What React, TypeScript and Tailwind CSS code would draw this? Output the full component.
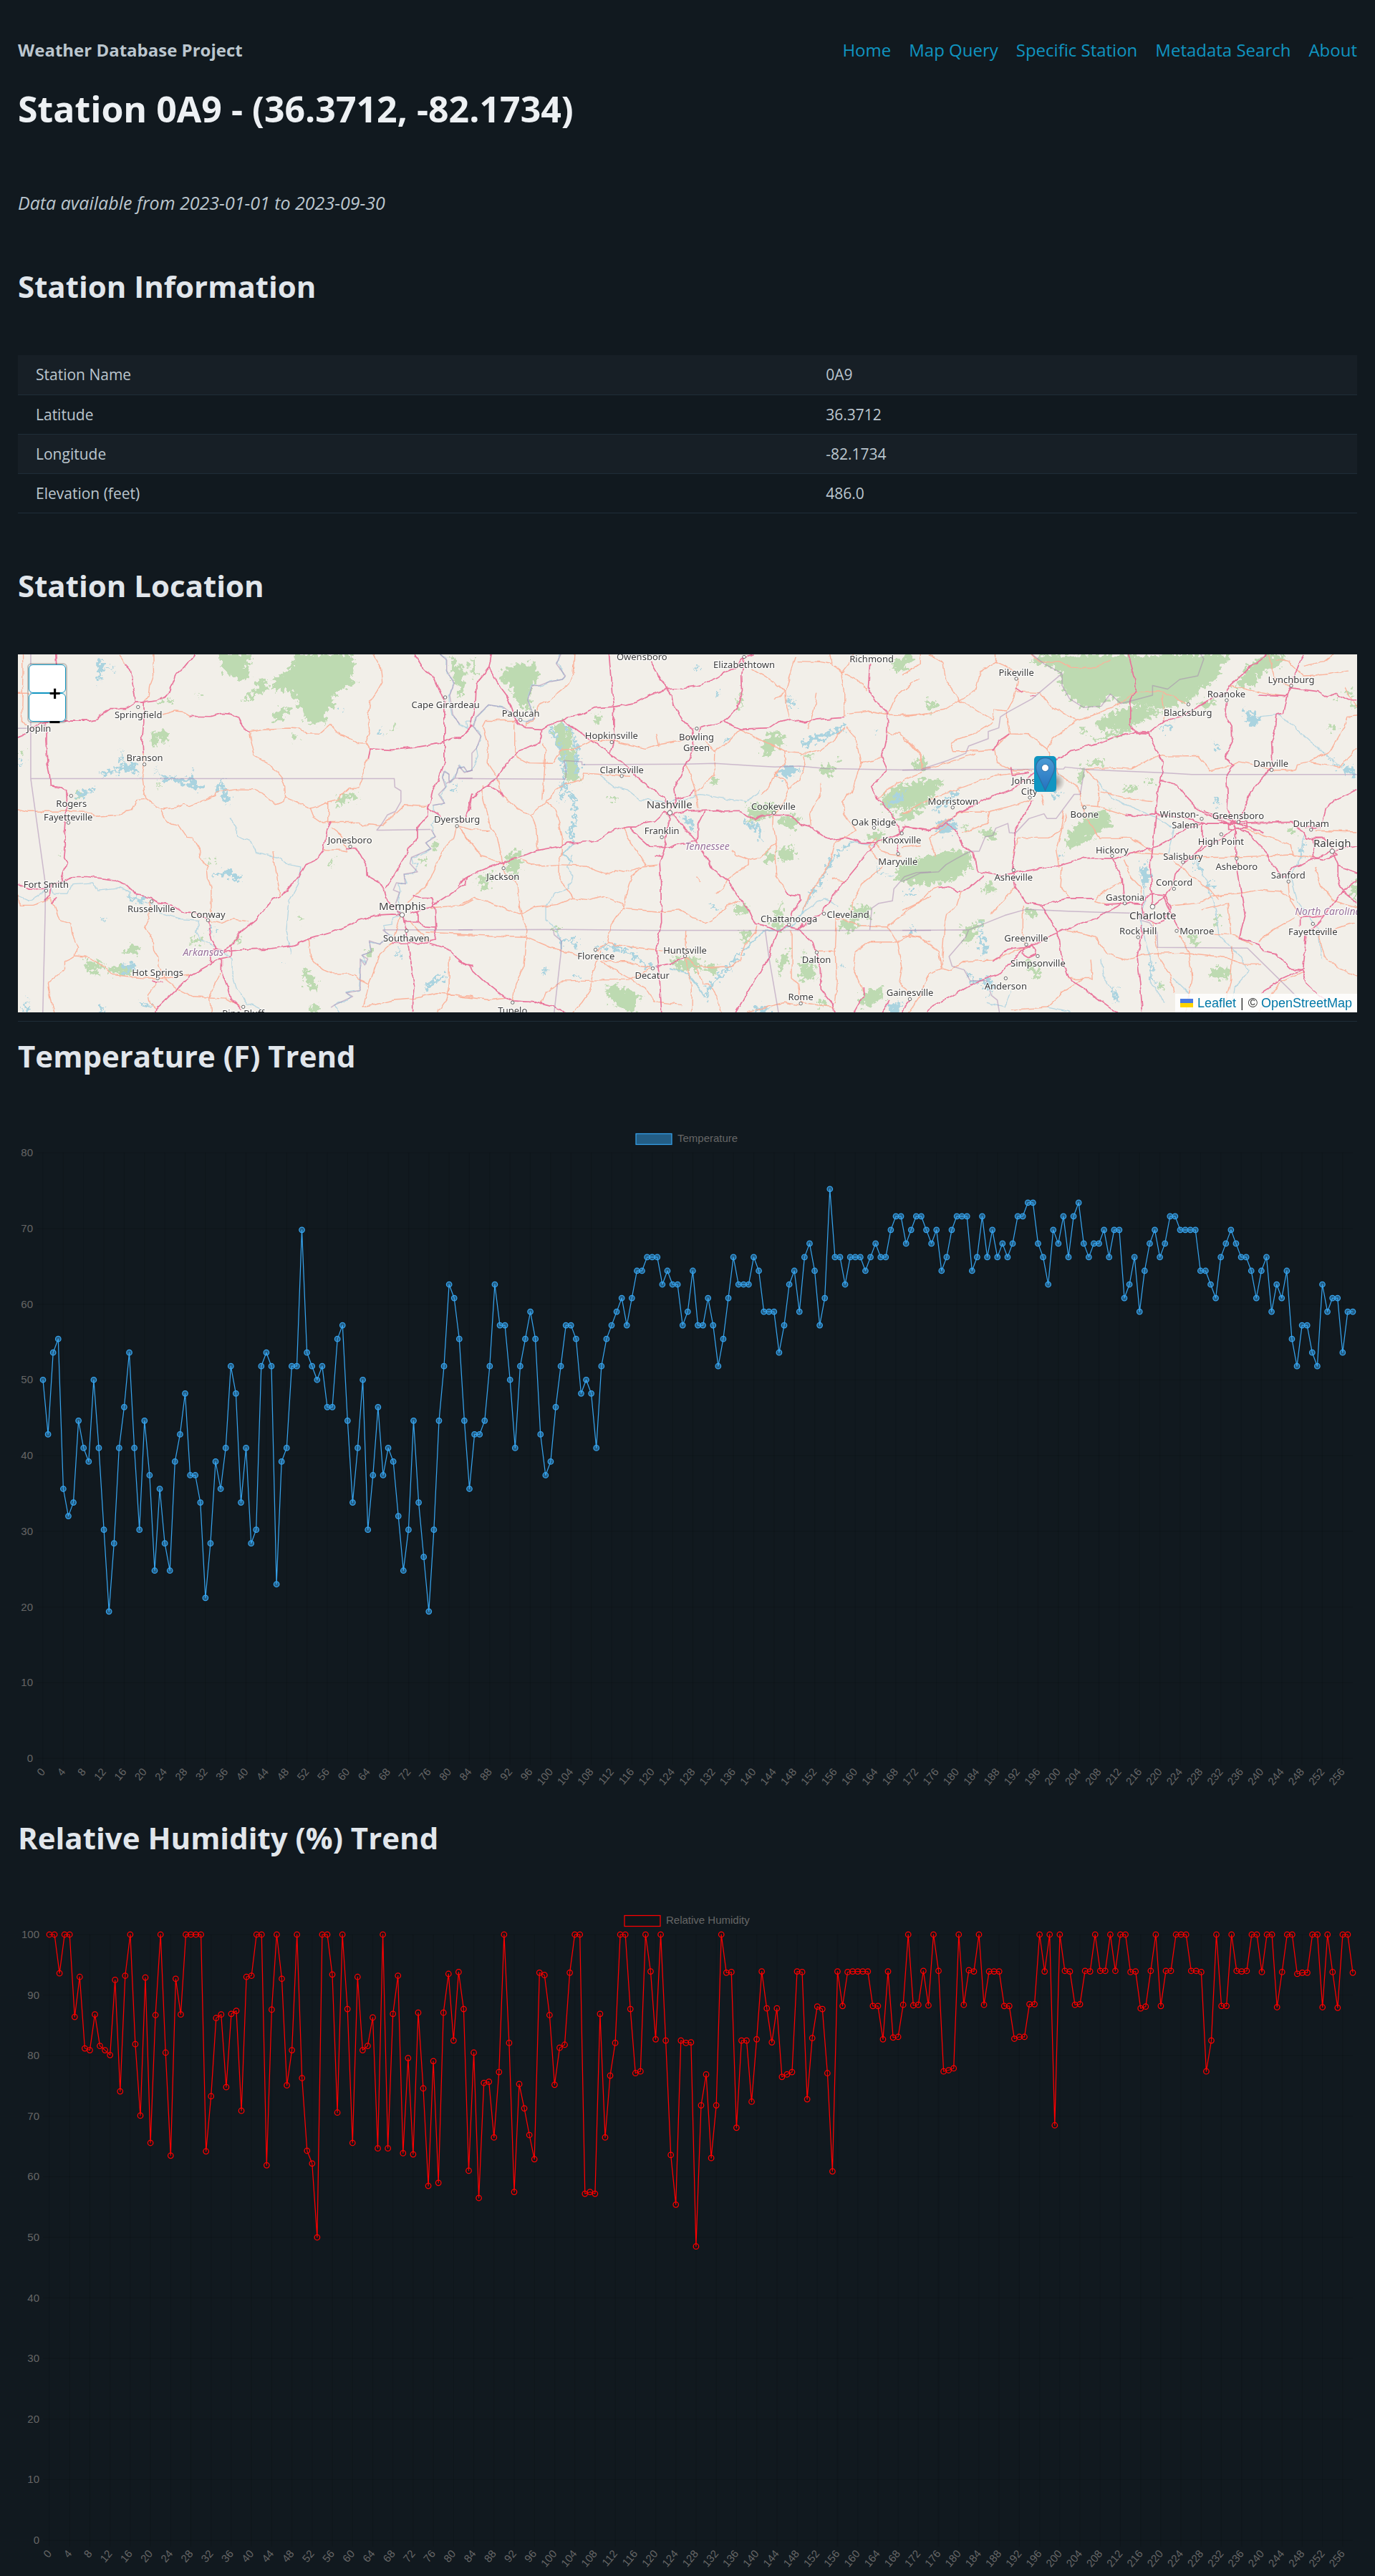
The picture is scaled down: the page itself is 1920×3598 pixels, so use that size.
import React from "react";

/* ------------------------------------------------------------------ data */

const celsius = [
  10, 6, 12, 13, 2, 0, 1, 7, 5, 4, 10, 5, -1, -7, -2, 5, 8, 12, 5, -1,
  7, 3, -4, 2, -2, -4, 4, 6, 9, 3, 3, 1, -6, -2, 4, 2, 5, 11, 9, 1,
  5, -2, -1, 11, 12, 11, -5, 4, 5, 11, 11, 21, 12, 11, 10, 11, 8, 8, 13, 14,
  7, 1, 5, 10, -1, 3, 8, 3, 5, 4, 0, -4, -1, 7, 1, -3, -7, -1, 7, 11,
  17, 16, 13, 7, 2, 6, 6, 7, 11, 17, 14, 14, 10, 5, 11, 13, 15, 13, 6, 3,
  4, 8, 11, 14, 14, 13, 9, 10, 9, 5, 11, 13, 14, 15, 16, 14, 16, 18, 18, 19,
  19, 19, 17, 18, 17, 17, 14, 15, 18, 14, 14, 16, 14, 11, 13, 16, 19, 17, 17, 17,
  19, 18, 15, 15, 15, 12, 14, 17, 18, 15, 19, 20, 18, 14, 16, 24, 19, 19, 17, 19,
  19, 19, 18, 19, 20, 19, 19, 21, 22, 22, 20, 21, 22, 22, 21, 20, 21, 18, 19, 21,
  22, 22, 22, 18, 19, 22, 19, 21, 19, 20, 19, 20, 22, 22, 23, 23, 20, 19, 17, 21,
  20, 22, 19, 22, 23, 20, 19, 20, 20, 21, 19, 21, 21, 16, 17, 19, 15, 18, 20, 21,
  19, 20, 22, 22, 21, 21, 21, 21, 18, 18, 17, 16, 19, 20, 21, 20, 19, 19, 18, 16,
  18, 19, 15, 17, 16, 18, 13, 11, 14, 14, 12, 11, 17, 15, 16, 16, 12, 15, 15,
];

const temperature = celsius.map((c) => 32 + c * 1.8);

const humidity = [
  100, 100, 93.6, 100, 100, 86.4, 93, 81.2, 80.9, 86.8, 81.6, 80.9, 80.1, 92.5, 74.1, 93.2, 100, 81.9, 70.1, 92.9,
  65.6, 86.7, 100, 80.5, 63.5, 92.7, 86.8, 100, 100, 100, 100, 64.2, 73.3, 86.2, 86.8, 74.8, 86.9, 87.4, 70.9, 93,
  93.2, 100, 100, 61.9, 87.6, 100, 92.7, 75.1, 80.9, 100, 76.3, 64.3, 62.2, 50, 100, 100, 93.4, 70.6, 100, 87.7,
  65.6, 93, 80.9, 81.6, 86.3, 64.7, 100, 64.7, 86.9, 93.2, 63.9, 79.6, 63.7, 87.1, 74.6, 58.5, 79.1, 59, 87.1, 93.5,
  82.5, 93.8, 87.7, 61, 80.5, 56.5, 75.5, 75.7, 66.5, 77.3, 100, 82.1, 57.5, 75.3, 71.3, 66.9, 62.9, 93.7, 93.3, 86.7,
  75.2, 81.3, 81.8, 93.7, 100, 100, 57.2, 57.5, 57.2, 86.9, 66.5, 76.7, 82.1, 100, 100, 87.7, 77.1, 77.4, 100, 93.9,
  82.7, 100, 82.5, 63.6, 55.4, 82.5, 82.1, 82.2, 48.5, 71.8, 76.9, 63.1, 71.8, 100, 93.7, 93.8, 68.1, 82.5, 82.5, 72.4,
  82.7, 93.9, 87.8, 82.2, 87.8, 76.5, 76.9, 77.3, 93.9, 93.8, 72.8, 82.9, 88.1, 87.7, 77.1, 60.9, 93.9, 88.2, 93.8, 93.9,
  93.9, 93.9, 93.9, 88.2, 88.2, 82.7, 93.9, 83, 83.1, 88.4, 100, 88.3, 88.4, 94, 88.3, 100, 94, 77.4, 77.6, 77.9,
  100, 88.4, 94.1, 93.9, 100, 88.4, 93.9, 93.9, 93.9, 88.2, 88.2, 82.8, 83.1, 83.1, 88.5, 88.5, 100, 93.9, 100, 68.5,
  100, 94, 93.9, 88.4, 88.5, 94, 93.9, 100, 94, 94, 100, 94, 100, 100, 93.8, 93.9, 87.8, 88.1, 94, 100,
  88.2, 94, 94, 100, 100, 100, 94, 94, 93.8, 77.4, 82.5, 100, 88.2, 88.2, 100, 94, 93.9, 94, 100, 100,
  93.8, 100, 100, 88, 93.8, 100, 100, 93.5, 93.7, 93.7, 100, 100, 88, 100, 93.8, 87.9, 100, 100, 93.7,
];

/* ---------------------------------------------------------------- charts */

type ChartProps = {
  title: string;
  values: number[];
  max: number;
  left: number;
  legendX: number;
  stroke: string;
  fill: string;
};

function TrendChart({ title, values, max, left, legendX, stroke, fill }: ChartProps) {
  const top = 39;
  const bottom = 885;
  const right = 1864;
  const x = (i: number) => left + ((right - left) * i) / (values.length - 1);
  const y = (v: number) => bottom - ((bottom - top) * v) / max;
  const yTicks = Array.from({ length: max / 10 + 1 }, (_, i) => i * 10);
  const xTicks = Array.from({ length: 65 }, (_, i) => i * 4);

  return (
    <svg
      viewBox="0 0 1870 935"
      className="block h-auto w-full font-['Liberation_Sans',Arial,sans-serif] text-[15px]"
      role="img"
      aria-label={`${title} trend`}
    >
      <g stroke="#000" strokeOpacity="0.1" strokeWidth="1.25">
        {yTicks.map((t) => (
          <line key={t} x1={left - 9} x2={right} y1={y(t)} y2={y(t)} />
        ))}
        {xTicks.map((t) => (
          <line key={t} x1={x(t)} x2={x(t)} y1={top} y2={bottom + 9} />
        ))}
      </g>
      <g fill="#666">
        {yTicks.map((t) => (
          <text key={t} x={left - 14} y={y(t) + 5} textAnchor="end">
            {t}
          </text>
        ))}
        {xTicks.map((t) => (
          <text key={t} transform={`translate(${x(t)} ${bottom + 16}) rotate(-50)`} y="5" textAnchor="end">
            {t}
          </text>
        ))}
        <text x={legendX + 58} y="24">
          {title}
        </text>
      </g>
      <rect x={legendX} y="12.5" width="50" height="15" fill={fill} stroke={stroke} strokeWidth="1.25" />
      <polyline
        points={values.map((v, i) => `${x(i).toFixed(1)},${y(v).toFixed(1)}`).join(" ")}
        fill="none"
        stroke={stroke}
        strokeWidth="1.25"
        strokeLinejoin="round"
      />
      <g fill={fill} stroke={stroke} strokeWidth="1.25">
        {values.map((v, i) => (
          <circle key={i} cx={x(i)} cy={y(v)} r="3.75" />
        ))}
      </g>
    </svg>
  );
}

/* ------------------------------------------------------------------- map */

/* The drawing is split in three sheets that share one sheet grid. */
const SX = 660 / 1568;
const SY = 530 / 1568;
const TOP = -14;

type Place = [name: string, x: number, y: number, dotX?: number, dotY?: number];

type Sheet = {
  ox: number;
  forest: string;
  lakes: string;
  rivers: string;
  borders: string;
  trunk: string;
  motorway: string;
  towns: Place[];
  cities: Place[];
  states: Place[];
};

const sheets: Sheet[] = [
  {
    ox: -25,
    forest:
      "M985 41L1170 41L1175 85L1165 140L1182 150L1160 170L1120 195L1105 225L1115 250L1080 275L1085 320L1060 330L1020 325L1000 270L975 220L955 185L920 195L900 170L930 130L960 100L975 60Z M725 41L835 41L832 70L810 95L830 110L820 145L790 148L745 115L730 80Z M850 150L885 145L890 185L855 210L800 240L850 180Z M905 290L925 265L980 255L930 315L903 320Z M500 370L530 360L555 365L555 410L540 412L535 385L515 430L498 400Z M1110 665L1130 630L1185 612L1185 630L1130 665Z M283 1302L310 1305L345 1320L340 1340L315 1335L330 1362L305 1362L283 1340Z M360 1340L400 1320L440 1325L445 1368L400 1365L365 1350Z M410 1265L440 1243L463 1255L460 1280L410 1275Z M1000 1345L1025 1350L1055 1410L1050 1430L1030 1425L1005 1375Z M1033 1490H1062L1060 1521H1030Z M630 1215L665 1208L680 1235L640 1238Z M1428 820L1450 815L1455 850L1435 855Z M1290 355L1310 328L1320 340L1300 362Z M965 385L985 370L990 400Z M780 1210L800 1205L798 1235L780 1235Z M1495 50L1510 60L1535 140L1510 170L1500 110Z M1560 60l20 10v60l-20 -10Z M1215 1260h25v30h-20z M692 885l12 5l2 28l-8 -6z M1090 890l14 -5l-6 35z M1390 885l20 -8l8 25l-25 8z M192 870l14 -14l-4 20z M515 240l20 -8l10 12l-25 5z M560 230l18 0l-6 18z M655 205l12 -5l-4 12z M518 575l10 0l-2 25z M248 610l20 -5l5 30l-15 8z M990 1120l12 5l0 25z M62 440l20 5l-8 20z",
    lakes:
      "M325 55L338 70L345 90L390 112L350 100L338 110L333 160L322 130L328 100L320 80Z M330 550L350 525L385 520L400 505L403 432L412 500L450 498L462 550L440 520L390 532L350 540Z M515 480L525 540L600 550L632 560L638 515L648 570L670 590L650 608L620 580L590 572L530 555Z M735 545L745 600L770 640L745 660L732 610L720 585Z M255 620L290 605L310 580L315 600L285 630L255 635Z M705 950L760 925L770 950L805 955L790 985L775 960L710 955Z M1405 1415L1470 1362L1480 1370L1470 1385L1415 1425Z M415 1005L430 1040L490 1060L470 1072L430 1050Z M400 1320L440 1315L460 1340L420 1360Z M1315 1260L1340 1295L1325 1290Z M1255 340l10 15l5 22l-12 -8z M1500 605L1528 570L1510 610Z M75 1521l10 -60l10 60z M700 1165l12 0l-8 40z M460 1475l40 10l15 18l-30 -8z M330 1490l15 5l-2 26l-12 0z M930 1310l14 8l-6 4z M340 1130l18 5l-12 5z M1130 270l10 0l-4 12z M59 480l25 8l-20 6z",
    rivers:
      "M1460 41L1480 60L1480 110L1505 160L1490 210L1490 235L1500 290L1525 330L1550 345L1545 320L1568 320 M1568 520L1550 525L1540 505L1520 510L1510 550L1490 570L1490 535L1475 525L1470 550L1480 590L1460 620L1475 655L1440 665L1440 690L1455 705L1430 745L1445 795L1412 820L1430 845L1400 870L1365 880L1370 910L1390 905L1370 950L1340 950L1350 990L1325 985L1330 1020L1322 1060L1330 1120L1300 1130L1300 1160L1270 1165L1280 1190L1300 1200L1260 1240L1225 1230L1230 1270L1200 1280L1215 1320L1195 1300L1195 1380L1190 1430L1145 1440L1165 1455L1145 1470L1110 1490L1125 1521 M59 1040L95 1060L130 1035L165 1005L180 1030L225 1030L240 990L310 985L325 1015L400 1005L430 1020L430 1045L470 1060L510 1075L530 1110L600 1135L660 1140L650 1190L665 1220L700 1240L740 1270L770 1300L770 1360L785 1420L820 1480L870 1510 M760 715L785 750L785 790L840 820L850 860L920 880L960 910L1000 920L990 990L960 1060L950 1180L965 1280",
    borders:
      "M102 41V555H1308L1310 590L1330 605L1330 650L1312 690L1285 705L1265 745L1250 768L1428 765 M102 555L150 985L150 1100L142 1521 M1270 1180H1568 M59 347H102 M1480 575L1510 553H1568 M1460 41L1482 65L1482 110L1507 160L1492 210L1502 290L1525 330 M1568 520L1550 527L1540 507L1520 512L1510 552L1490 572L1490 537L1473 525L1468 550L1478 590L1455 620L1475 657L1435 665 M1430 765L1445 795L1412 820L1430 845L1365 880L1360 905L1385 940L1340 950L1345 990L1315 985L1305 1015L1325 1025L1310 1080L1325 1120 M1270 1180L1290 1200L1260 1240L1225 1225L1232 1270L1200 1285L1220 1300L1210 1325L1195 1300L1195 1430L1148 1440L1170 1455L1110 1490L1098 1500",
    trunk:
      "M75 41L76 120L72 325L90 335 M59 202H95 M59 680L90 690L230 690L300 695L330 713L390 708L420 685L440 680L455 643L487 640 M475 450L478 500L472 545L478 600L485 640L530 682L557 738L590 745L620 800L640 802L662 850L668 890L686 915L690 970L703 1000L703 1120 M530 682L580 675L610 660L625 668L665 650L715 625L725 608L800 598L850 600L870 620L915 662L940 650L947 630L985 650L1030 678L1090 655 M828 360L833 400L845 462L885 490L915 520L935 550L945 590L947 630 M540 290L580 275L605 278L630 297 M828 360L870 350L960 346L1000 350L1020 366L1060 368L1095 330L1130 375L1190 410L1215 412L1228 432 M1240 41L1262 90L1268 155L1250 195L1228 235L1222 300L1228 360L1213 400L1228 432L1222 475L1208 490L1203 550L1190 592L1158 594L1120 640L1090 650L1090 740 M1030 678L1040 710L1075 740L1098 735L1190 735L1205 755L1225 742L1270 748L1340 665L1415 670 M1098 755L1130 785L1150 845 M1075 848L1130 850L1150 855 M905 855L915 930L930 1045 M60 1035L65 1078L110 1078L150 1062L165 1050L180 1085L195 1140L235 1155L240 1200L258 1250L250 1290L215 1310L215 1340L160 1400L165 1440L180 1521 M250 1290L300 1295L345 1330L370 1365L470 1378L545 1380L600 1370L635 1367 M500 1065L495 1130L480 1170L505 1215L510 1265L522 1290L525 1330L545 1380L590 1425L640 1455L750 1462L800 1500 M690 1140L735 1153L770 1135L825 1145 M730 1360L710 1410L695 1460L700 1521 M520 1400L490 1450L495 1480L520 1505 M1025 1220L1030 1290L1060 1335L1105 1360L1175 1362L1190 1385L1222 1405 M1300 1235L1260 1280L1225 1400L1205 1500L1300 1472L1360 1465L1450 1440L1568 1455 M1490 1290L1490 1420L1480 1470L1450 1521 M1350 1070L1420 990L1445 920L1475 840L1505 800L1515 755 M1525 760L1568 825 M1330 1120L1300 1235 M1360 1145L1420 1225 M1410 1190L1568 1198 M1430 1088L1535 1078L1568 1055 M395 41L412 80 M508 41L510 130L498 170L495 210L480 235",
    motorway:
      "M59 382L90 366L130 325L155 320L215 313L300 314L320 308L345 283L365 265L420 265L450 240L478 239L520 233L548 214L565 190L587 120L612 92L645 41 M185 41L187 80 M153 320L152 400L157 490L165 540L167 585L205 592L220 605L222 640L219 700L214 760L217 830L213 885L222 905L206 960L204 978 M412 80L430 105L443 180L450 238 M478 235L477 320L472 385L475 450 M630 297L700 298L735 285L765 288L790 305L805 340L828 360 M1222 475L1228 432L1300 436L1370 427L1455 410L1500 386L1530 384L1568 335 M1375 41L1400 90L1440 140L1475 240L1475 490L1455 560L1435 600L1428 650L1418 675L1418 710L1385 755L1385 800L1360 840L1280 1010 M1418 675L1465 710 M1568 620L1555 680L1545 720 M59 990L95 1015L150 1012L170 990L215 975L245 960L290 960L370 972L420 995L455 1035L500 1045L530 1070L570 1078L605 1103L650 1112L690 1135L695 1190L700 1220L715 1250L745 1270L820 1260L895 1258L975 1243L1020 1220L1100 1190L1155 1163L1180 1145L1240 1120L1300 1115L1334 1118 M740 1268L770 1240L800 1185L850 1135L905 1055L930 1045L965 990L990 965L1015 910L1045 895L1073 850L1085 765L1098 735 M518 1521L520 1505L630 1370L700 1320L735 1298L765 1290L768 1240 M700 1318L698 1290L718 1250 M735 1298L735 1355L755 1420L765 1465L800 1510 M1145 845L1180 845L1195 865L1215 910L1217 955L1260 985L1275 1018L1285 1060L1334 1118L1340 1145L1385 1145L1385 1100 M1370 1040L1395 1048L1430 1050L1443 1090L1447 1180L1440 1222L1410 1232L1300 1235 M1385 1145L1410 1165L1445 1168 M1334 1118L1350 1190L1355 1250L1365 1330L1377 1410L1370 1480L1370 1521 M1425 1235L1480 1255L1500 1280L1545 1325L1568 1330 M1360 1110L1430 1085L1480 1045L1545 990L1550 960L1568 950 M150 1060L165 1035L170 990 M170 1070L188 1045 M505 1390L520 1397L545 1395",
    towns: [
      ["Springfield", 459, 289, 458, 259],
      ["Joplin", 129, 346, 129, 312],
      ["Branson", 480, 468, 479, 496],
      ["Rogers", 237, 657, 236, 626],
      ["Fayetteville", 226, 712, 227, 737],
      ["Cape Girardeau", 1478, 248, 1477, 219],
      ["Dyersburg", 1516, 723, 1516, 751],
      ["Jonesboro", 1161, 809, 1162, 836],
      ["Fort Smith", 153, 991, 153, 1018],
      ["Russellville", 502, 1092, 503, 1062],
      ["Conway", 690, 1114, 690, 1140],
      ["Southaven", 1348, 1214, 1349, 1184],
      ["Hot Springs", 523, 1354, 523, 1380],
      ["Pine Bluff", 807, 1525, 807, 1498],
    ],
    cities: [["Memphis", 1335, 1084, 1334, 1118]],
    states: [["Arkansas", 674, 1272]],
  },
  {
    ox: 615,
    forest:
      "M150 100L205 80L260 85L265 140L245 175L235 230L240 270L215 265L190 225L170 175L135 150Z M0 80L18 100L15 200L0 210Z M315 335L350 322L370 370L395 490L403 555L360 572L352 480L325 390Z M450 285L470 290L470 325L450 330Z M1010 400L1040 355L1075 380L1078 420L1045 430L1025 465L1008 450Z M1200 510L1225 492L1245 520L1235 550L1200 535Z M1150 450h25v18h-25z M1405 640L1440 590L1540 560L1568 555V620L1500 660L1440 690L1410 670Z M1440 720L1490 690L1568 620V650L1480 740Z M1450 930L1500 900L1568 888V998L1520 990L1455 970Z M960 660L1045 655L1050 700L970 740Z M1060 710L1140 712L1115 770L1060 740Z M1060 840L1110 835L1118 890L1070 895Z M1020 860h30v40h-35z M1030 1150L1060 1090L1075 1055L1075 1140L1080 1180L1050 1185Z M910 1080L960 1080L965 1110L930 1120Z M935 1185L965 1185L965 1220L945 1235Z M1265 1150L1310 1130L1330 1170L1310 1185L1265 1175Z M1300 1085L1370 1080L1365 1140L1310 1130Z M1060 1330L1080 1270L1105 1265L1090 1310L1060 1370Z M1130 1410L1145 1260L1155 1320L1180 1310L1180 1390L1150 1380Z M490 1410L530 1410L605 1455L580 1521L545 1510L500 1465Z M165 870L210 845L205 930L190 960L160 930Z M60 970L110 940L105 1000L80 1010Z M700 1310L750 1290L790 1290L800 1340L740 1350Z M830 1320L865 1330L855 1365L810 1340Z M1340 1440L1410 1410L1410 1460L1360 1500L1330 1480Z M1430 75L1510 50L1490 90L1460 110Z M315 1160L340 1175L340 1192L320 1190Z M1350 790L1410 770L1400 820L1360 810Z M840 550h18v30h-18z M1550 240h18v50z M500 630h22v15h-22z M935 200l12 0l-8 60l-12 10z M1255 470h18v20h-16z M1195 1470h18v25h-18z",
    lakes:
      "M1060 520L1100 490L1140 520L1105 530L1090 560L1065 540Z M1140 410L1170 380L1250 355L1280 320L1285 345L1240 380L1180 400L1150 430Z M740 700L790 740L780 770L750 730Z M950 730L1000 750L1005 810L985 770L950 750Z M1420 660L1480 600L1530 590L1470 650L1430 670Z M1380 870l10 70l50 20l-45 -12z M830 1070L860 1095L880 1085L850 1105Z M985 1490L1040 1500L1020 1521L980 1521Z M1425 1500L1470 1470L1460 1521L1420 1521Z M1510 1170l12 5l-10 20z M280 1340l15 -10l-8 40z M850 200l20 -15l0 25z M1090 220l15 10l15 30l-20 -5z M880 400l25 -20l-15 30z M1380 350l20 10l-5 10z M1475 1025l20 5l-10 10z M1265 1335l18 0l-10 8z M375 1360l30 10l-20 8z M780 90l25 8l-15 8z",
    rivers:
      "M340 41L325 80L355 130L345 145L300 155L270 170L245 170L230 230L245 280L250 310L225 320L200 310L150 260L100 250L60 300L50 340L75 380L60 430L65 460L45 520L20 530L0 500 M470 540L520 590L560 600L600 640L680 650L760 640L800 620L900 640L960 650L1000 600 M380 870L360 920L380 960L365 1010L320 1030L290 1080L290 1140L320 1165L340 1225 M1140 1110L1210 1050L1260 1080 M1380 830L1330 820L1310 815",
    borders:
      "M340 41L325 80L355 130L345 145L300 155L270 170L245 170L230 230L245 280L250 310L225 320 M180 290L150 260L100 250L60 300L50 340L75 380L60 430L45 450L45 520L20 530L0 500 M0 555L355 557L358 530L350 480L410 485L410 497L755 495L850 492L1050 507L1130 503L1220 513L1422 518L1540 520L1568 510 M0 1180L315 1178L640 1182H1568 M1365 1180L1372 1090L1395 1070L1440 1060L1445 1010L1480 960L1520 943L1568 940 M315 1178L318 1200L342 1225L340 1280L318 1521 M1018 1182L1030 1290L1062 1521",
    trunk:
      "M385 41L380 120L365 165L330 200L300 235L265 250L250 320L225 325V345 M190 315L90 315L80 340L100 420L98 490L130 550 M187 320V440L195 465L235 490L315 492L340 440L380 435L440 400L500 395L620 430L660 415L735 400L775 375 M655 370L665 420 M278 410L290 440L280 640 M130 550L140 620L178 660L238 705L258 760L262 830L265 850 M238 705L290 650L325 600L350 580L410 560L415 535L470 540L570 545 M290 650L320 680L335 740L345 800L345 870L335 900L335 970L380 1045 M82 580L80 640L95 700L100 740L130 800L140 860L150 925 M0 750L40 765L105 768 M10 770L75 875L150 905 M205 885L260 915L330 910L430 915L445 930L490 950L520 935L550 942L610 920L660 915 M550 755L570 820L605 875L625 915 M150 930L195 995L200 1060L207 1115L228 1180L215 1340L190 1400L180 1480 M0 1080L50 1048L100 1065L207 1115L250 1085L330 1075L380 1048L430 1055L480 1040L540 1070L550 1092L620 1100L680 1105L740 1100L780 1130L820 1153L860 1125L890 1080L935 1060 M610 920L575 960L560 1020L548 1090L505 1170L495 1235 M0 1200L220 1208L300 1250L400 1285 M460 1265L495 1235L570 1250L655 1262L730 1280 M757 1180L755 1285L760 1350L775 1400L775 1521 M755 1290L790 1330L830 1335L910 1330L935 1300L950 1240L985 1190L990 1165 M480 1310L560 1310L600 1330L640 1335 M470 1310L560 1375L620 1420L650 1475L740 1490 M275 1490L290 1440L350 1390L440 1388L570 1385L640 1340 M470 1265L455 1330L440 1388V1425L410 1480L380 1521 M790 1340L810 1400L830 1400L860 1460L870 1521 M850 445L848 540L790 610L795 680 M757 500L775 550L790 610 M815 390L850 445L880 420L935 350L1000 390L1080 440L1150 450L1200 435L1240 400L1285 345 M1080 440L1085 490L1045 540L1030 590L1005 620 M1045 540L1085 560L1095 600L1080 650L1047 700L1045 750L1055 820L1050 870L1055 960L1085 1015 M1145 460L1150 500L1130 560L1095 600 M975 100L1040 150L1085 195L1090 260L1100 305 M1045 230L1085 195L1105 110L1120 50 M1125 70L1200 72L1235 80L1270 115L1280 200L1280 300 M1235 41L1240 80 M1272 115L1300 70L1310 41 M1280 120L1340 160L1355 190 M1160 350L1180 270L1190 200 M1290 285L1365 275L1425 290L1500 295L1568 285 M1425 290L1450 220L1525 140 M1290 340L1320 400L1335 490L1305 610L1275 650L1280 700L1320 770 M1335 490L1380 480L1405 460 M1425 360L1440 370L1465 370L1480 400L1500 405L1535 455L1535 510L1568 510 M1200 570L1200 620L1165 700L1170 750 M1055 820L1000 880L960 890L920 870L910 850 M960 890L960 910L890 975L880 1005L855 1030 M1320 770L1250 820L1235 890L1195 980L1160 1040L1145 1100 M1385 800L1360 830L1410 920L1340 990L1310 1060L1300 1110 M1390 640L1420 600L1480 560L1540 530 M1255 1120L1253 1200L1250 1270L1190 1270 M1250 1270L1255 1400L1248 1480 M1253 1135L1290 1140L1330 1165L1425 1168L1500 1090L1568 1040 M1425 1168L1455 1230L1350 1230L1315 1280L1310 1340L1345 1440 M1455 1230L1500 1200L1568 1230 M1455 1230L1470 1330L1460 1400L1500 1440 M1105 1185L1105 1380L1130 1405L1135 1480L1250 1500 M960 1521L1080 1480L1130 1490 M0 1455L100 1468L150 1460 M790 960L803 980 M1240 965L1280 985 M1385 820L1400 850L1430 865L1470 870",
    motorway:
      "M110 41L102 95L60 160L57 240L40 340L10 385L0 386 M102 95L130 160L160 210L180 280L195 325L225 347L277 350L320 320L345 315L360 300L410 290L455 262L520 258L590 240L635 210L690 185L735 182L800 170L870 130L880 115L920 95L948 52L980 41 M277 350L275 385L268 410L200 440L185 455L150 510L130 550L95 580L140 612L148 632 M95 580L45 640L40 680L10 740 M500 41L505 120L510 200L518 258L515 320L517 390L503 452 M345 315L390 350L500 450L560 505L590 550L680 630L690 640V665 M638 70L665 130L692 185L710 215L715 250L740 305L775 350L780 400L780 440L755 500L715 600L720 650L702 690 M948 52L940 130L942 190L925 265L880 320L830 335L805 345L795 380 M880 320L935 350L1030 345L1060 320L1105 307L1150 325L1190 310L1278 303 M1365 80L1360 180L1385 235L1422 280L1425 320L1420 400L1405 460L1422 520L1372 585L1390 640L1430 690L1455 740L1470 780 M0 1003L30 958L140 902L165 895L265 850L335 835L360 820L435 815L465 808L500 775L560 755L590 755L610 738L650 730L680 695L702 705L750 690L860 685L880 692L930 690L970 712L985 722L1005 706L1105 706L1130 740L1165 752L1230 808L1290 800L1340 820L1385 818L1440 795L1470 780L1480 755L1568 768 M568 755L600 800L635 838L700 840L720 828L780 815L795 795L795 740L815 690 M702 690L780 800L815 860L845 930L890 972L950 1075L965 1100L985 1155L1010 1160L1060 1187L1090 1165L1125 1175L1140 1155 M702 705L685 840L668 900L672 1000L674 1150L655 1260L668 1380L674 1521 M1060 1187L1035 1260L1030 1300L985 1385L920 1521 M1125 1175L1175 1230L1200 1330L1203 1425L1245 1490L1247 1521 M1125 1175L1200 1115L1215 1090L1240 1040L1385 820 M1085 1015L1095 1033L1135 1038L1137 1060L1105 1105L1100 1125 M0 1308L30 1325L90 1395L150 1455L180 1470L245 1475L290 1490L320 1500L355 1521 M655 1330L700 1320L750 1295L755 1285 M1312 1521L1345 1450L1343 1420 M1470 1521L1500 1470 M1405 1521L1430 1470 M720 640L765 625L785 600 M652 872L672 876 M1455 830L1460 860",
    towns: [
      ["Owensboro", 609, 49],
      ["Elizabethtown", 948, 82, 948, 52],
      ["Richmond", 1371, 60],
      ["Paducah", 207, 283, 206, 312],
      ["Hopkinsville", 508, 375, 509, 404],
      ["Bowling", 790, 381, 791, 348],
      ["Green", 790, 425],
      ["Clarksville", 542, 517, 542, 544],
      ["Cookeville", 1045, 669, 1047, 696],
      ["Oak Ridge", 1378, 734, 1379, 758],
      ["Franklin", 675, 768, 675, 797],
      ["Knoxville", 1471, 809, 1471, 781],
      ["Maryville", 1458, 896, 1459, 866],
      ["Jackson", 148, 960, 150, 925],
      ["Chattanooga", 1097, 1132, 1097, 1158],
      ["Cleveland", 1293, 1114, 1213, 1113],
      ["Florence", 457, 1288, 455, 1262],
      ["Huntsville", 752, 1262, 752, 1288],
      ["Decatur", 643, 1368, 645, 1339],
      ["Dalton", 1188, 1301, 1189, 1273],
      ["Rome", 1136, 1455, 1136, 1484],
      ["Gainesville", 1498, 1438, 1498, 1466],
      ["Tupelo", 180, 1513, 180, 1480],
    ],
    cities: [["Nashville", 700, 663, 702, 696]],
    states: [["Tennessee", 826, 833]],
  },
  {
    ox: 1235,
    forest:
      "M450 41L1100 41L1060 90L1040 150L980 190L960 230L860 270L800 250L720 245L690 210L655 255L600 260L560 225L530 180L515 140L530 120L470 80L420 80Z M1140 100L1200 41L1270 50L1250 90L1180 130L1170 170L1100 180Z M640 320L700 280L800 250L860 280L790 320L750 350L700 350L650 360Z M630 395L680 370L750 345L740 370L640 400Z M980 240L1040 230L1020 260L990 265Z M0 900L60 880L180 850L225 860L235 920L160 980L80 990L0 985Z M545 850L550 770L610 720L670 680L690 690L690 740L620 810Z M580 570L590 510L610 515L600 560Z M610 490L660 475L675 490L620 505Z M725 600L780 580L780 600L730 615Z M0 610L60 570L140 560L90 640L0 690Z M30 500L60 470L80 500L60 530Z M75 235L110 240L115 265L85 270Z M265 1020L280 985L305 1000L305 1025Z M200 1170L270 1140L265 1170L240 1180L235 1230L200 1240Z M405 1100L430 1090L450 1105L440 1130L410 1125Z M1020 1345L1050 1330L1090 1350L1070 1390L1020 1375Z M250 770L310 770L310 810L280 800Z M0 41L45 41L0 110Z M810 560h25v20h-25z M1480 1000L1509 980V1080Z M590 350l20 0l-5 25z M1430 200l20 10l-10 15z M1465 190l30 0l0 20l-20 0z M1480 250l29 -10v30z M1415 330l25 0l0 25l-20 0z M1035 1120l15 0l5 40l-15 0z M950 1200l25 0l0 40l-20 0z M405 1310l25 0l30 50l-20 20z M200 750l14 0l-2 30z M850 1400l20 0l0 30l-20 -10z M1280 760l20 0l0 30l-15 0z",
    lakes:
      "M110 740L170 720L190 760L120 790Z M1135 310L1160 290L1190 320L1165 345Z M790 930L805 900L820 950L810 1010L795 980Z M1455 500L1490 510L1509 540L1470 530Z M960 880L1000 930L985 940Z M1010 970L1035 1000L1015 1020Z M255 1140L270 1220L280 1260L265 1300L255 1200Z M205 1340L240 1390L290 1380L305 1410L290 1450L270 1400L230 1395Z M695 1450l15 -25l3 40l-10 20z M100 690L180 600L190 610L120 690Z M1040 630l12 0l-8 40z M500 610l40 5l-40 20z M520 850l15 30l-10 0z M860 350L890 320L900 325L865 360Z M820 1310l15 10l-10 50l40 50l-45 -40z M1025 400l25 20l0 20z M20 1020l30 8l-20 8z M30 1170l15 -5l-8 20z M1320 860l12 -40l4 5l-6 60z M1130 260l40 30l-5 15l-20 -5z M1410 470l40 30l-10 8z",
    rivers:
      "M970 880L1010 980L1040 1100L1050 1200L1120 1290L1150 1350L1100 1420L1090 1521 M1170 300L1250 290L1290 330L1350 400L1460 510 M480 1500L560 1521 M900 1380L950 1440L960 1521 M660 1300L670 1380L720 1480 M800 980L805 1060L790 1150L820 1290L825 1400L870 1480 M280 1480L340 1500L360 1430 M1330 790L1320 880L1290 960L1310 1060L1380 1180L1390 1300 M640 560L700 640L850 720L900 760L880 870",
    borders:
      "M430 41L470 80L530 120L430 225L350 280L325 300L320 345L285 360L285 390L220 420L210 450L150 480L65 515 M530 120L530 170L555 225L600 260L660 255L690 205L725 245L830 210L830 170L880 185L920 145L980 130L1000 60L990 41 M0 520L65 517L360 517L535 515L540 507L620 518L860 530L960 538H1509 M605 510L590 620L570 620L510 720L480 720L470 700L420 720L375 780L355 778L350 740L310 760L300 790L275 795L255 855L225 855L180 885L145 910L120 940L60 945L0 980 M0 1182L220 1180L340 1120L410 1095L550 1103L785 1112L790 1140L820 1150L845 1190L847 1252L1145 1255L1320 1470 M220 1180L210 1210L155 1290L165 1330L205 1345L225 1390L280 1390L295 1450L315 1470L322 1521",
    trunk:
      "M90 41L135 75L145 150L190 230L215 250L300 310L305 270L345 275L370 220L385 140 M190 230L245 185L260 110L310 75L375 110 M190 230L140 270L50 290L0 295 M310 75V41 M60 41L60 80L0 130 M345 275L358 370L420 372L480 430L520 540L585 590L590 640L610 720L655 800L760 800L830 860 M380 195L455 200L500 260L580 315L640 290L720 245L770 200L850 195L900 215L940 245 M580 315L500 390L480 430 M860 205L870 280L870 310 M355 370L305 430L315 490L365 520L430 520 M160 405L230 375L300 320 M160 405L170 440L250 440L300 435 M0 385L20 400L60 460L65 515L150 490L240 450 M430 41L460 75L520 70L560 95L640 100L690 60 M610 515L700 510L760 515L850 455L880 462L980 460L1020 520L1085 505L1118 485L1180 500L1225 520L1305 520L1310 495L1350 485L1420 440L1465 340L1475 300L1509 295 M1350 485L1450 510L1475 470L1509 430 M610 515L640 560L655 610L650 670L590 665 M650 670L740 705 M0 700L90 640L200 590L300 545L390 530 M100 760L200 690L290 690L400 655L430 640 M290 690L280 740L200 780 M470 665L460 620 M150 745L90 800L110 880 M0 840L60 830 M370 860L385 800L480 800L525 770L535 690 M545 700L510 850L520 920 M530 920L525 1000L560 1050 M375 1000L295 1115 M730 980L660 1030L640 1060L680 1075 M0 1100L60 1065L100 1010L120 1000 M195 1020L180 1080L150 1110L140 1160L130 1340L160 1350L200 1310L300 1305 M400 1080V1200L410 1250L300 1305 M545 1180L640 1210L680 1280L740 1305L800 1280L950 1275L1080 1295L1120 1320L1190 1320 M0 1205L60 1210L120 1270L130 1340L90 1360L60 1450L20 1521 M600 1380L540 1430L480 1500L360 1510 M545 1380L630 1380L625 1300 M735 890L760 960L790 1000L795 1050 M760 860L880 870L960 960L1020 1010L1050 1055 M890 1080L980 1070L1030 1040L1140 1025L1180 1015L1250 1020L1300 1060 M940 880L1080 880L1290 870L1370 880 M1130 760L1290 830L1300 870 M1280 980L1285 1060L1320 1130 M920 1200L950 1270L960 1380L940 1521 M1020 1195L1100 1200L1160 1245 M1095 1250L1090 1390L1060 1521 M1300 1130L1230 1180L1180 1230 M830 1150L850 1290L890 1370L900 1440 M1500 1150L1400 1190 M1380 1190L1400 1290L1450 1340L1509 1370 M1370 920L1390 1000L1430 1060L1509 1090 M1330 1350L1250 1400L1180 1521 M1240 60L1280 70L1330 130L1400 125L1480 110 M1465 180L1509 260 M1290 170L1240 150L1215 41 M1090 170L1190 200L1270 215 M1370 770L1509 775 M1430 41L1400 70L1330 90 M660 610L760 640L830 650 M990 1100L1080 1070L1090 1200",
    motorway:
      "M750 41L770 130L775 190L755 240L755 330L775 368L815 370L850 455L868 490L857 560L845 640L840 720L830 850L825 900L828 1085 M1210 41L1150 100L1090 165L1075 200L1000 240L950 290L870 315L820 365L775 362L700 385L650 410L560 440L510 478L435 530L365 600L300 625L180 700L145 738L90 770L0 755 M145 738L180 775L200 830L240 870L250 940L330 955L370 945L440 930L520 912L600 883L695 885L770 860L845 835L900 795L940 760L1000 740L1140 740L1290 735L1330 780L1340 805L1400 800 M435 640L400 710L370 770L375 850L365 930L375 1000L410 1065L460 1078L515 1190L530 1300L550 1380L600 1420L700 1510L715 1521 M460 1078L545 1050L635 1050 M80 1521L110 1490L240 1400L330 1355L400 1260L500 1200L545 1175L640 1130L730 1070L800 1075 M828 1085L870 1045L900 985L905 950L935 900L985 855L1060 800L1105 760 M695 885L730 970L735 1060 M670 1075L735 1070 M865 1040L890 1110L920 1180 M805 1045L830 1030L870 1035L890 1090L870 1140L840 1155L805 1130L795 1080Z M790 1160L795 1200L780 1300L790 1420L797 1521 M1075 240L1070 290L1093 340L1095 400L1078 440L1072 470L1097 500L1075 540L1080 640L1078 680L1105 760L1107 880L1120 1000L1137 1120L1118 1215L1180 1240L1200 1270L1240 1280L1285 1340L1325 1345L1340 1400L1400 1470 M857 560L910 580L935 620L985 690L1080 740 M1105 760L1150 780L1210 860L1215 895L1265 960L1300 920L1380 880L1426 855L1509 830 M1240 290L1235 360L1225 400L1228 500L1200 545L1155 610L1130 700L1110 735 M1240 290L1265 285L1280 200L1290 170L1310 100L1330 41 M1290 180L1270 215L1180 210 M1290 180L1380 195L1410 220L1440 205L1480 230H1509 M1335 760L1390 755L1405 680L1440 640L1509 600 M1426 855L1445 910V970L1460 1020L1395 1130L1340 1200L1330 1340L1260 1380L1190 1440 M1445 915L1509 945 M1509 975L1460 1020L1509 1070 M1360 800L1400 800L1440 870L1400 890L1365 880Z M740 705L790 710L830 700L940 720L1000 740 M375 180L400 200 M425 210L440 215 M120 1005L150 1000L185 1022L220 1010L270 955 M300 1310L350 1260L400 1250L430 1240L445 1280L420 1295L400 1280V1250 M300 440L320 400L355 370 M360 510L365 540L420 530 M1080 740L1100 730L1140 730L1145 760L1080 765Z M1320 1165V1130L1400 1120M1200 780L1000 690 M995 735V830L970 870",
    towns: [
      ["Pikeville", 378, 116, 378, 142],
      ["Lynchburg", 1290, 144, 1290, 171],
      ["Roanoke", 1075, 204, 1076, 231],
      ["Blacksburg", 947, 280, 949, 248],
      ["Danville", 1223, 492, 1225, 519],
      ["Johnson", 422, 563],
      ["City", 421, 607, 423, 633],
      ["Morristown", 168, 648, 167, 674],
      ["Boone", 604, 702, 604, 674],
      ["Winston-", 919, 702, 993, 721],
      ["Salem", 938, 746],
      ["Greensboro", 1114, 708, 1115, 734],
      ["Durham", 1356, 740, 1356, 766],
      ["High Point", 1057, 813, 1058, 785],
      ["Hickory", 696, 848, 696, 874],
      ["Salisbury", 931, 875, 931, 900],
      ["Asheboro", 1109, 917, 1109, 885],
      ["Sanford", 1280, 953, 1281, 980],
      ["Asheville", 369, 961, 369, 933],
      ["Concord", 902, 982, 901, 1010],
      ["Gastonia", 739, 1043, 738, 1070],
      ["Rock Hill", 782, 1182, 782, 1210],
      ["Monroe", 977, 1184, 910, 1184],
      ["Fayetteville", 1362, 1187, 1362, 1155],
      ["Greenville", 411, 1212, 411, 1240],
      ["Simpsonville", 450, 1317, 449, 1288],
      ["Anderson", 343, 1410, 343, 1380],
    ],
    cities: [
      ["Raleigh", 1426, 822, 1426, 855],
      ["Charlotte", 831, 1122, 830, 1084],
    ],
    states: [["North Carolina", 1412, 1104]],
  },
];

/* Broad reservoirs along the Tennessee and Cumberland rivers, middle sheet. */
const wideWater =
  "M297 340L320 370L335 420L350 500L350 560L340 600L345 650 M350 580L385 640L388 730L370 780L385 810 M350 325L375 360L390 410L400 540 M342 1225L380 1220L400 1265 M455 1265L480 1250L560 1260L600 1310L650 1340 M820 1460L835 1410L890 1340L940 1270 M1165 1040L1200 990L1225 920L1260 860L1310 815";
const slimWater =
  "M340 1225L342 1260 M700 1340L760 1360L800 1420L820 1460 M940 1270L1015 1185L1060 1180L1110 1165L1140 1110L1165 1040 M385 810L345 870L380 900";

function Labels({ sheet, places, kind }: { sheet: Sheet; places: Place[]; kind: "town" | "city" | "state" }) {
  const style =
    kind === "city" ? "text-[15px]" : kind === "state" ? "text-[14px] italic" : "text-[13px]";
  const color = kind === "state" ? "#99739c" : "#3b3b3b";
  return (
    <g className={style} fill={color} textAnchor="middle">
      {places.map(([name, x, y, dx, dy]) => (
        <g key={name}>
          {dx !== undefined && dy !== undefined && (
            <circle
              cx={sheet.ox + dx * SX}
              cy={TOP + dy * SY}
              r={kind === "city" ? 3.2 : 2.2}
              fill="#fff"
              stroke="#666"
              strokeWidth="1"
            />
          )}
          <text
            x={sheet.ox + x * SX}
            y={TOP + y * SY + 5}
            stroke="#fff"
            strokeOpacity="0.75"
            strokeWidth="2.5"
            strokeLinejoin="round"
            paintOrder="stroke"
          >
            {name}
          </text>
        </g>
      ))}
    </g>
  );
}

function MapDrawing() {
  const line = { fill: "none", vectorEffect: "non-scaling-stroke" as const, strokeLinejoin: "round" as const };
  return (
    <svg
      viewBox="0 0 1870 500"
      preserveAspectRatio="xMidYMid slice"
      className="block h-full w-full font-['Noto_Sans',sans-serif]"
      role="img"
      aria-label="Map of the station area"
    >
      <defs>
        <filter id="ragged" x="0" y="0" width="1870" height="500" filterUnits="userSpaceOnUse">
          <feTurbulence type="fractalNoise" baseFrequency="0.16" numOctaves="3" seed="4" />
          <feDisplacementMap in="SourceGraphic" scale="22" xChannelSelector="R" yChannelSelector="G" />
        </filter>
        <filter id="winding" x="0" y="0" width="1870" height="500" filterUnits="userSpaceOnUse">
          <feTurbulence type="fractalNoise" baseFrequency="0.08" numOctaves="2" seed="9" />
          <feDisplacementMap in="SourceGraphic" scale="6" xChannelSelector="R" yChannelSelector="G" />
        </filter>
      </defs>
      <rect width="1870" height="500" fill="#f2efe9" />
      <g filter="url(#ragged)">
        {sheets.map((s) => (
          <g key={s.ox} transform={`translate(${s.ox} ${TOP}) scale(${SX} ${SY})`}>
            <path d={s.forest} fill="#bddab1" />
            <path d={s.lakes} fill="#aad3df" />
          </g>
        ))}
        <g transform={`translate(615 ${TOP}) scale(${SX} ${SY})`}>
          <path d={wideWater} stroke="#aad3df" strokeWidth="4" {...line} />
        </g>
      </g>
      <g filter="url(#winding)">
        {sheets.map((s) => (
          <g key={s.ox} transform={`translate(${s.ox} ${TOP}) scale(${SX} ${SY})`}>
            <path d={s.rivers} stroke="#b5d6e2" strokeWidth="1.3" {...line} />
          </g>
        ))}
        <g transform={`translate(615 ${TOP}) scale(${SX} ${SY})`}>
          <path d={slimWater} stroke="#aad3df" strokeWidth="2" {...line} />
        </g>
        {sheets.map((s) => (
          <g key={s.ox} transform={`translate(${s.ox} ${TOP}) scale(${SX} ${SY})`}>
            <path d={s.trunk} stroke="#fbb29a" strokeWidth="1.4" {...line} />
            <path d={s.motorway} stroke="#e9739a" strokeWidth="1.7" {...line} />
          </g>
        ))}
      </g>
      {sheets.map((s) => (
        <g key={s.ox} transform={`translate(${s.ox} ${TOP}) scale(${SX} ${SY})`}>
          <path d={s.borders} stroke="#a584b0" strokeOpacity="0.5" strokeWidth="1.5" {...line} />
        </g>
      ))}
      {sheets.map((s) => (
        <g key={s.ox}>
          <Labels sheet={s} places={s.states} kind="state" />
          <Labels sheet={s} places={s.towns} kind="town" />
          <Labels sheet={s} places={s.cities} kind="city" />
        </g>
      ))}
    </svg>
  );
}

function StationMap() {
  return (
    <div className="relative h-[500px] overflow-hidden bg-[#f2efe9]">
      <MapDrawing />

      <div className="absolute left-[13px] top-3 flex flex-col rounded-md border-2 border-black/20 font-['Liberation_Mono',monospace] text-[28px] font-bold leading-7 text-black">
        <button
          type="button"
          aria-label="Zoom in"
          className="relative z-10 flex h-10 w-[52px] justify-end rounded-md border border-[#1095c1] bg-white pr-[6px] pt-7"
        >
          +
        </button>
        <button
          type="button"
          aria-label="Zoom out"
          className="flex h-10 w-[52px] justify-end rounded-md border border-[#1095c1] bg-white pr-[6px] pt-7"
        >
          −
        </button>
      </div>

      <button type="button" aria-label="Station 0A9" className="absolute left-[75.9%] top-[142px]">
        <svg width="62" height="52" viewBox="0 0 62 52" className="block">
          <defs>
            <linearGradient id="pin" x1="0" y1="0" x2="0" y2="1">
              <stop offset="0" stopColor="#4a9bd4" />
              <stop offset="1" stopColor="#2472c0" />
            </linearGradient>
            <radialGradient id="shade">
              <stop offset="0" stopColor="#000" stopOpacity="0.5" />
              <stop offset="1" stopColor="#000" stopOpacity="0" />
            </radialGradient>
          </defs>
          <ellipse cx="27" cy="36" rx="16" ry="15" fill="url(#shade)" />
          <rect width="31" height="50" rx="5" fill="#1095c1" />
          <path
            d="M15.500 2.500C8 2.500 2.500 8.500 2.500 16C2.500 20 4 23.500 6 27.500L15.500 48L25 27.500C27 23.500 28.500 20 28.500 16C28.500 8.500 23 2.500 15.500 2.500Z"
            fill="url(#pin)"
            stroke="#2e6fa6"
            strokeWidth="1.3"
          />
          <circle cx="15.500" cy="16.500" r="5" fill="#fff" stroke="#2e6fa6" strokeWidth="1" />
        </svg>
      </button>

      <div className="absolute bottom-0 right-0 flex h-[26px] items-center gap-[6px] bg-white/80 px-[7px] font-['Liberation_Sans',Arial,sans-serif] text-[18px] text-[#333]">
        <a href="#leaflet" className="flex items-center gap-[6px] text-[#0078a8]">
          <svg width="18" height="12" viewBox="0 0 18 12" aria-hidden="true">
            <path fill="#4c7be1" d="M0 0h18v6H0z" />
            <path fill="#ffd500" d="M0 6h18v6H0z" />
          </svg>
          Leaflet
        </a>
        <span>|</span>
        <span>
          ©{" "}
          <a href="#openstreetmap" className="text-[#0078a8]">
            OpenStreetMap
          </a>
        </span>
      </div>
    </div>
  );
}

/* ------------------------------------------------------------------ page */

const links = ["Home", "Map Query", "Specific Station", "Metadata Search", "About"];

const facts = [
  ["Station Name", "0A9"],
  ["Latitude", "36.3712"],
  ["Longitude", "-82.1734"],
  ["Elevation (feet)", "486.0"],
];

function SectionTitle({ children }: { children: React.ReactNode }) {
  return <h2 className="pb-[69px] pt-[33px] text-[42px] font-bold leading-[55px] text-[#e1e6eb]">{children}</h2>;
}

export default function App() {
  return (
    <div className="bg-[#11191f] px-[25px] font-['Open_Sans','Noto_Sans',sans-serif] text-[24px] leading-[38px] text-[#bbc6ce]">
      <nav className="flex items-center justify-between pt-[51px]">
        <strong className="font-bold">Weather Database Project</strong>
        <ul className="flex gap-[25px]">
          {links.map((l) => (
            <li key={l}>
              <a href={`#${l.toLowerCase().replace(" ", "-")}`} className="text-[#1095c1]">
                {l}
              </a>
            </li>
          ))}
        </ul>
      </nav>

      <main>
        <h1 className="pt-[33px] text-[50px] font-bold leading-[60px] text-[#edf0f3]">
          Station 0A9 - (36.3712, -82.1734)
        </h1>
        <p className="pb-[37px] pt-[82px] text-[25px] italic">Data available from 2023-01-01 to 2023-09-30</p>

        <SectionTitle>Station Information</SectionTitle>
        <table className="mb-10 w-full border-collapse text-left text-[21px] leading-[34px]">
          <tbody>
            {facts.map(([name, value]) => (
              <tr key={name} className="h-[55px] border-b border-[#1f2d38] odd:bg-[#171f26]">
                <th scope="row" className="w-[59%] px-[25px] font-normal">
                  {name}
                </th>
                <td className="px-[25px]">{value}</td>
              </tr>
            ))}
          </tbody>
        </table>

        <SectionTitle>Station Location</SectionTitle>
        <StationMap />
        <hr className="-mb-[13px] mt-3 border-t border-[#1f2d38]" />

        <SectionTitle>Temperature (F) Trend</SectionTitle>
        <TrendChart
          title="Temperature"
          values={temperature}
          max={80}
          left={35}
          legendX={863}
          stroke="#36a2eb"
          fill="rgba(54,162,235,0.5)"
        />

        <SectionTitle>Relative Humidity (%) Trend</SectionTitle>
        <TrendChart
          title="Relative Humidity"
          values={humidity}
          max={100}
          left={44}
          legendX={847}
          stroke="#ff0000"
          fill="rgba(0,0,0,0.1)"
        />
      </main>
    </div>
  );
}
